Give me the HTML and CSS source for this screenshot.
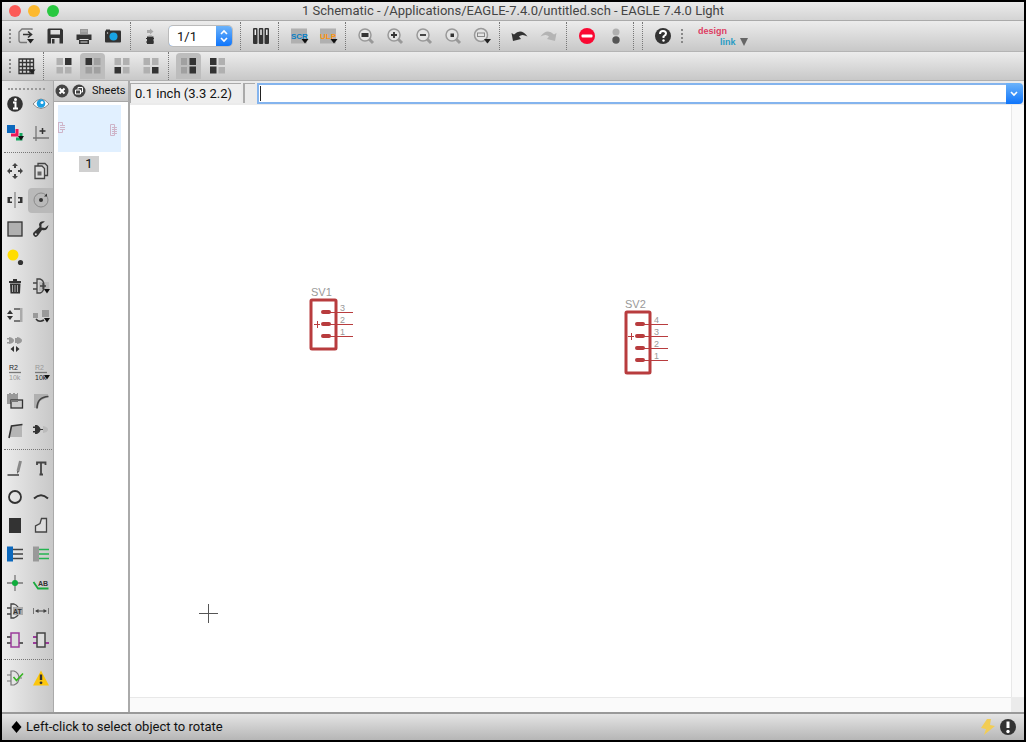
FILE: index.html
```html
<!DOCTYPE html>
<html lang="en">
<head>
<meta charset="utf-8">
<title>1 Schematic - EAGLE 7.4.0 Light</title>
<link rel="stylesheet" href="styles.css">
</head>
<body>
<div class="window">
<header class="titlebar">
  <div class="lights">
    <button class="light red" aria-label="Close"></button>
    <button class="light amber" aria-label="Minimize"></button>
    <button class="light green" aria-label="Zoom"></button>
  </div>
  <h1 class="title">1 Schematic - /Applications/EAGLE-7.4.0/untitled.sch - EAGLE 7.4.0 Light</h1>
</header>

<div class="toolbar main-bar">
  <span class="grip"></span>
  <button class="tool" aria-label="Open"><svg viewBox="0 0 20 20"><path d="M16 4V3H6L3 6V14Q3 16.500 5 16.500H11" fill="none" stroke="#777" stroke-width="1.300"/><path d="M7 8.500H15M12 5.500L15.500 8.500L12 11.500" fill="none" stroke="#333" stroke-width="1.600"/><path d="M11 13H18L14.500 17.500Z" fill="#222"/></svg></button>
  <button class="tool" aria-label="Save"><svg viewBox="0 0 20 20"><path fill-rule="evenodd" d="M3.500 2.500H16.500L18 4V17.500H2.500V3.500ZM5.500 4V8.500H15V4ZM6 12V17.500H14.500V12Z" fill="#333"/><rect x="7" y="13" width="2.500" height="4.500" fill="#333"/></svg></button>
  <button class="tool" aria-label="Print"><svg viewBox="0 0 20 20"><rect x="6" y="3" width="8" height="5" fill="#999"/><path d="M2.500 8.500H17.500V14H2.500Z" fill="#333"/><rect x="5" y="12" width="10" height="6" fill="#333"/><path d="M5.500 13.500H14.500M6.500 16H13.500" stroke="#ddd" stroke-width="1.200"/><path d="M7 5H13" stroke="#ccc" stroke-width=".6"/></svg></button>
  <button class="tool" aria-label="CAM"><svg viewBox="0 0 20 20"><rect x="2" y="4.500" width="16" height="12" rx="1" fill="#333"/><rect x="3" y="3.500" width="4" height="2" fill="#333"/><circle cx="10.500" cy="10.500" r="4" fill="#18a4e4"/><circle cx="4.500" cy="7" r=".7" fill="#ddd"/></svg></button>
  <span class="sep"></span>
  <button class="tool" aria-label="Board"><svg viewBox="0 0 20 20"><path d="M6 4H9V2.500L12.500 5.500L9 8.500V7H6Z" fill="#aaa"/><rect x="6" y="10.500" width="6.500" height="7.500" fill="#333"/><path d="M5 12.500H13M5 16H13" stroke="#333"/><path d="M7.500 10H11" stroke="#999"/></svg></button>
  <span class="combo">
    <select aria-label="Sheet"><option>1/1</option></select>
    <svg class="stepper" viewBox="0 0 16 20"><path d="M5 8L8 5L11 8M5 12L8 15L11 12" fill="none" stroke="#fff" stroke-width="1.600"/></svg>
  </span>
  <span class="sep"></span>
  <button class="tool" aria-label="Use library"><svg viewBox="0 0 20 20"><g fill="#333"><rect x="2" y="2" width="4.500" height="16" rx="1"/><rect x="7.800" y="2" width="4.500" height="16" rx="1"/><rect x="13.500" y="2" width="4.500" height="16" rx="1"/></g><path d="M4.300 3.500V9M10 3.500V9M15.800 3.500V9" stroke="#eee" stroke-width="1.500"/></svg></button>
  <span class="sep"></span>
  <button class="tool" aria-label="Script"><svg viewBox="0 0 20 20"><rect x="2" y="2.500" width="16" height="15" fill="#b0b0b0"/><text x="2" y="13" class="scr">SCR</text><path d="M12.500 13H19.500L16 17.500Z" fill="#111"/></svg></button>
  <button class="tool" aria-label="User language program"><svg viewBox="0 0 20 20"><rect x="2" y="2.500" width="16" height="15" fill="#b0b0b0"/><text x="2" y="13" class="ulp">ULP</text><path d="M12.500 13H19.500L16 17.500Z" fill="#111"/></svg></button>
  <span class="sep"></span>
  <button class="tool" aria-label="Fit"><svg viewBox="0 0 20 20"><path d="M13 13L17 17" stroke="#999" stroke-width="3"/><circle cx="9" cy="9" r="6" fill="#e4e4e4" stroke="#999" stroke-width="1.500"/><rect x="5.500" y="7" width="7" height="4" fill="#333"/></svg></button>
  <button class="tool" aria-label="Zoom in"><svg viewBox="0 0 20 20"><path d="M13 13L17 17" stroke="#999" stroke-width="3"/><circle cx="9" cy="9" r="6" fill="#e4e4e4" stroke="#999" stroke-width="1.500"/><path d="M6 9H12M9 6V12" stroke="#333" stroke-width="1.800"/></svg></button>
  <button class="tool" aria-label="Zoom out"><svg viewBox="0 0 20 20"><path d="M13 13L17 17" stroke="#999" stroke-width="3"/><circle cx="9" cy="9" r="6" fill="#e4e4e4" stroke="#999" stroke-width="1.500"/><path d="M6 9H12" stroke="#333" stroke-width="1.800"/></svg></button>
  <button class="tool" aria-label="Redraw"><svg viewBox="0 0 20 20"><path d="M13 13L17 17" stroke="#999" stroke-width="3"/><circle cx="9" cy="9" r="6" fill="#e4e4e4" stroke="#999" stroke-width="1.500"/><rect x="7.500" y="7.500" width="3.500" height="3.500" fill="#333"/></svg></button>
  <button class="tool" aria-label="Select zoom"><svg viewBox="0 0 20 20"><path d="M13 13L16 16" stroke="#999" stroke-width="3"/><circle cx="9" cy="9" r="6.500" fill="#e4e4e4" stroke="#999" stroke-width="1.500"/><rect x="5.500" y="7" width="7" height="3.500" fill="none" stroke="#888"/><path d="M12 13H19L15.500 17.500Z" fill="#222"/></svg></button>
  <span class="sep"></span>
  <button class="tool" aria-label="Undo"><svg viewBox="0 0 20 20"><path d="M1.500 7L4 8.500Q11 1.500 17.500 10.500Q12 7.500 9 10.500L11 13L3 15Z" fill="#333"/></svg></button>
  <button class="tool" aria-label="Redo"><svg viewBox="0 0 20 20"><path d="M17.500 7L15 8.500Q8 1.500 1.500 10.500Q7 7.500 10 10.500L8 13L16 15Z" fill="#b4b4b4"/></svg></button>
  <span class="sep"></span>
  <button class="tool" aria-label="Stop"><svg viewBox="0 0 20 20"><circle cx="10" cy="10" r="8" fill="#fa0832"/><rect x="4.500" y="8.500" width="11" height="3" rx="1" fill="#fff"/></svg></button>
  <button class="tool" aria-label="Go"><svg viewBox="0 0 20 20"><circle cx="10" cy="6" r="3.500" fill="#b0b0b0"/><circle cx="10" cy="14" r="3.700" fill="#555"/></svg></button>
  <span class="sep"></span><span class="sep"></span>
  <button class="tool" aria-label="Help"><svg viewBox="0 0 20 20"><circle cx="10" cy="10" r="8" fill="#333"/><path d="M7 8Q7 5 10 5Q13 5 13 7.500Q13 9 10.500 10.500V12" fill="none" stroke="#fff" stroke-width="2"/><circle cx="10.500" cy="14.500" r="1.200" fill="#fff"/></svg></button>
  <span class="grip late"></span>
  <button class="brand" aria-label="design link"><svg viewBox="0 0 54 24"><text x="0" y="10" class="design">design</text><text x="22" y="21" class="link">link</text><path d="M42 14H50L46 22Z" fill="#666"/></svg></button>
</div>

<div class="toolbar layer-bar">
  <span class="grip"></span>
  <button class="tool" aria-label="Grid"><svg viewBox="0 0 20 20"><path d="M3 3H17.500V17.500H3ZM3 6.500H17M3 10.500H17M3 14H17M6.500 3V17M10.500 3V17M14 3V17" fill="none" stroke="#333" stroke-width="1.300"/><path d="M12.500 13.500H19.500L16 18Z" fill="#222"/></svg></button>
  <span class="sep"></span>
  <button class="tool" aria-label="Top right"><svg viewBox="0 0 20 20"><path d="M2.500 2H9V9H2.500ZM2.500 11H9V17.500H2.500ZM11 11H17.500V17.500H11Z" fill="#b0b0b0"/><path d="M11 2H17.500V9H11Z" fill="#333"/></svg></button>
  <button class="tool on" aria-label="Top left"><svg viewBox="0 0 20 20"><path d="M11 2H17.500V9H11ZM2.500 11H9V17.500H2.500ZM11 11H17.500V17.500H11Z" fill="#a0a0a0"/><path d="M2.500 2H9V9H2.500Z" fill="#333"/></svg></button>
  <button class="tool" aria-label="Bottom left"><svg viewBox="0 0 20 20"><path d="M2.500 2H9V9H2.500ZM11 2H17.500V9H11ZM11 11H17.500V17.500H11Z" fill="#b0b0b0"/><path d="M2.500 11H9V17.500H2.500Z" fill="#333"/></svg></button>
  <button class="tool" aria-label="Bottom right"><svg viewBox="0 0 20 20"><path d="M2.500 2H9V9H2.500ZM11 2H17.500V9H11ZM2.500 11H9V17.500H2.500Z" fill="#b0b0b0"/><path d="M11 11H17.500V17.500H11Z" fill="#333"/></svg></button>
  <span class="sep"></span>
  <button class="tool on" aria-label="Right column"><svg viewBox="0 0 20 20"><path d="M2 2H8V9H2ZM2 11H8V17.500H2Z" fill="#a0a0a0"/><path d="M10.500 2H17V9H10.500ZM10.500 10.500H17V17.500H10.500Z" fill="#333"/></svg></button>
  <button class="tool" aria-label="Left column"><svg viewBox="0 0 20 20"><path d="M10.500 2H17V9H10.500ZM10.500 11H17V17.500H10.500Z" fill="#b0b0b0"/><path d="M2 2H8.500V9H2ZM2 10.500H8.500V17.500H2Z" fill="#333"/></svg></button>
</div>

<div class="workspace">
<nav class="palette" aria-label="Commands">
  <span class="grip-row"></span>
  <div class="group two">
    <button class="cmd" aria-label="Info"><svg viewBox="0 0 20 20"><circle cx="10" cy="10" r="7.800" fill="#333"/><circle cx="10.500" cy="5.500" r="1.500" fill="#fff"/><path d="M8 8.500H10.500V14.500M8 14.500H13" fill="none" stroke="#fff" stroke-width="2"/></svg></button>
    <button class="cmd" aria-label="Show"><svg viewBox="0 0 20 20"><path d="M2 10Q10 0 18 10Q10 19 2 10Z" fill="#fff" stroke="#888"/><circle cx="10" cy="9.500" r="4.300" fill="#1b9ee2"/><circle cx="11" cy="8.500" r="1.500" fill="#fff"/></svg></button>
    <button class="cmd" aria-label="Display"><svg viewBox="0 0 20 20"><rect x="2" y="2" width="8" height="8" fill="#0b68bd"/><path d="M12 6V12H6" fill="none" stroke="#ee1858" stroke-width="3"/><path d="M16 10V16H11" fill="none" stroke="#16a860" stroke-width="3"/><path d="M13 13H19L16 17.500Z" fill="#111"/></svg></button>
    <button class="cmd" aria-label="Mark"><svg viewBox="0 0 20 20"><path d="M5 3V18M2 15H18" stroke="#777" stroke-width="1.300"/><path d="M11.500 5V11M8.500 8H14.500" stroke="#333" stroke-width="1.500"/></svg></button>
  </div>
  <span class="rule"></span>
  <div class="group ten">
    <button class="cmd" aria-label="Move"><svg viewBox="0 0 20 20"><g fill="#444"><path d="M10 2L13 5H11V7H9V5H7ZM10 18L13 15H11V13H9V15H7ZM2 10L5 7V9H7V11H5V13ZM18 10L15 7V9H13V11H15V13Z"/></g></svg></button>
    <button class="cmd" aria-label="Copy"><svg viewBox="0 0 20 20"><path d="M7 5V2.500H14L16.500 5V14.500H14" fill="none" stroke="#444" stroke-width="1.300"/><path d="M4 5H11L13.500 7.500V17.500H4Z" fill="#ddd" stroke="#444" stroke-width="1.300"/><rect x="6.500" y="10.500" width="4" height="4" fill="#666"/></svg></button>
    <button class="cmd" aria-label="Mirror"><svg viewBox="0 0 20 20"><path d="M10 2V18" stroke="#888" stroke-width="1.300"/><path d="M2.500 7H7V8.500H5V11.500H7V13H2.500ZM17.500 7H13V8.500H15V11.500H13V13H17.500Z" fill="#333"/></svg></button>
    <button class="cmd on" aria-label="Rotate"><svg viewBox="0 0 20 20"><circle cx="10" cy="10" r="7" fill="none" stroke="#8a8a8a"/><circle cx="10" cy="10" r="2" fill="#333"/><path d="M13 6.500L16 3.500V6.500Z" fill="#333"/></svg></button>
    <button class="cmd" aria-label="Group"><svg viewBox="0 0 20 20"><rect x="3" y="3" width="14" height="14" fill="#b0b0b0" stroke="#333" stroke-width="1.300"/></svg></button>
    <button class="cmd" aria-label="Change"><svg viewBox="0 0 20 20"><path d="M17.500 6L14 9L10.500 8.500V5L14 2.500Q9 1.500 8 5.500L8.500 8L3 13Q1 15 3 17Q5 19 7 16.500L11 11Q16.500 12.500 17.500 6Z" fill="#333"/><circle cx="4.800" cy="15.200" r="1" fill="#ddd"/></svg></button>
    <button class="cmd" aria-label="Paste"><svg viewBox="0 0 20 20"><circle cx="8" cy="8" r="5.500" fill="#ffdd00"/><circle cx="15.500" cy="15.500" r="2.600" fill="#333"/></svg></button>
    <span></span>
    <button class="cmd" aria-label="Delete"><svg viewBox="0 0 20 20"><path d="M4 5H16V7H4ZM8 3H12V5H8ZM5 7.500H15.500L15 17.500H5.500Z" fill="#333"/><path d="M7.500 9V16M10 9V16M12.500 9V16" stroke="#aaa"/></svg></button>
    <button class="cmd" aria-label="Add"><svg viewBox="0 0 20 20"><rect x="8" y="6" width="10" height="9" fill="#bbb"/><path d="M6 3H9Q13 4 13 10Q13 16 9 17H6ZM2 7H6M2 13H6M9 10H15M12 7V13" fill="none" stroke="#444" stroke-width="1.300"/><path d="M13 13H19L16 17.500Z" fill="#111"/></svg></button>
    <button class="cmd" aria-label="Pinswap"><svg viewBox="0 0 20 20"><path d="M2 9L5 5L8 9ZM2 11H8L5 15Z" fill="#333"/><path d="M9 4H16M9 16H16" stroke="#555" stroke-width="1.300"/><rect x="15" y="3" width="2.500" height="14" fill="#aaa"/></svg></button>
    <button class="cmd" aria-label="Replace"><svg viewBox="0 0 20 20"><rect x="2" y="8" width="5" height="5" fill="#999"/><rect x="11" y="5" width="7" height="7" fill="#999"/><path d="M5 14Q8 18 13 15" fill="none" stroke="#333" stroke-width="1.500"/><path d="M13 13H19L16 17.500Z" fill="#111"/></svg></button>
    <button class="cmd" aria-label="Gateswap"><svg viewBox="0 0 20 20"><path d="M4 3Q9 4 9 6.500Q9 9 4 10ZM12 3Q17 4 17 6.500Q17 9 12 10ZM2 4H5V5.500H2ZM2 8H5V9.500H2ZM10 4H12V9H10Z" fill="#999"/><path d="M5.500 15L9 12V18ZM14.500 15L11 12V18Z" fill="#333"/></svg></button>
    <span></span>
    <button class="cmd" aria-label="Name"><svg viewBox="0 0 20 20"><text x="4" y="8" class="tiny dark">R2</text><path d="M4 10.500H16" stroke="#777" stroke-width="1.300"/><text x="4" y="18" class="tiny pale">10k</text></svg></button>
    <button class="cmd" aria-label="Value"><svg viewBox="0 0 20 20"><text x="4" y="8" class="tiny pale">R2</text><path d="M4 10.500H16" stroke="#777" stroke-width="1.300"/><text x="4" y="18" class="tiny dark">10k</text><path d="M13 13H19L16 17.500Z" fill="#111"/></svg></button>
    <button class="cmd" aria-label="Smash"><svg viewBox="0 0 20 20"><path d="M2 3H4V2H6V3H8V2H10V3H12V2H13V13H2Z" fill="#999"/><rect x="6" y="9" width="11.500" height="8" fill="#ccc" stroke="#333" stroke-width="1.300"/><path d="M6 10H13" stroke="#777" stroke-width="2"/></svg></button>
    <button class="cmd" aria-label="Miter"><svg viewBox="0 0 20 20"><path d="M3 3H17V6L9 10L7 17H3Z" fill="#b0b0b0"/><path d="M6 17.500Q6 6 17.500 5.500" fill="none" stroke="#444" stroke-width="1.600"/></svg></button>
    <button class="cmd" aria-label="Split"><svg viewBox="0 0 20 20"><path d="M6 6L17 5V17H5Z" fill="#b5b5b5"/><path d="M4 18L6.500 6L17.500 4.500" fill="none" stroke="#333" stroke-width="1.600"/></svg></button>
    <button class="cmd" aria-label="Invoke"><svg viewBox="0 0 20 20"><path d="M4 5H6Q9.500 7 9.500 9.500Q9.500 12 6 14H4ZM2 6.500H5V8H2ZM2 11H5V12.500H2Z" fill="#333"/><path d="M9 9H12V10H9Z" fill="#333"/><path d="M12 6Q17 7 17 9.500Q17 12 12 13Z" fill="#bbb"/></svg></button>
  </div>
  <span class="rule"></span>
  <div class="group seven">
    <button class="cmd" aria-label="Wire"><svg viewBox="0 0 20 20"><path d="M15.500 3L13 13" stroke="#888" stroke-width="3"/><path d="M2.500 17H14" stroke="#333" stroke-width="1.400"/><path d="M12 13L12 16L14.500 13Z" fill="#666"/></svg></button>
    <button class="cmd" aria-label="Text"><svg viewBox="0 0 20 20"><path d="M6 7V4.500H14.500V7M10 4.500V16.500M8.500 16.500H12" fill="none" stroke="#444" stroke-width="1.800"/></svg></button>
    <button class="cmd" aria-label="Circle"><svg viewBox="0 0 20 20"><circle cx="10" cy="10" r="6" fill="none" stroke="#333" stroke-width="1.800"/></svg></button>
    <button class="cmd" aria-label="Arc"><svg viewBox="0 0 20 20"><path d="M3 11.500Q10 5 17 11.500" fill="none" stroke="#333" stroke-width="2"/></svg></button>
    <button class="cmd" aria-label="Rect"><svg viewBox="0 0 20 20"><rect x="4" y="3" width="12" height="15" fill="#333"/></svg></button>
    <button class="cmd" aria-label="Polygon"><svg viewBox="0 0 20 20"><path d="M4.500 17V11L9 8.500L10.500 3.500H15.500V17Z" fill="#ddd" stroke="#444" stroke-width="1.300"/></svg></button>
    <button class="cmd" aria-label="Bus"><svg viewBox="0 0 20 20"><path d="M8 5.500H18M8 10H18M8 14.500H18" stroke="#444" stroke-width="1.600"/><rect x="2" y="2.500" width="6" height="15" fill="#0b68bd"/></svg></button>
    <button class="cmd" aria-label="Net"><svg viewBox="0 0 20 20"><path d="M8 5.500H18M8 10H18M8 14.500H18" stroke="#24b450" stroke-width="1.700"/><rect x="2" y="2.500" width="6" height="15" fill="#999"/></svg></button>
    <button class="cmd" aria-label="Junction"><svg viewBox="0 0 20 20"><path d="M2 10H18M10 2V18" stroke="#777" stroke-width="1.300"/><circle cx="10" cy="10" r="3" fill="#0eac3c"/></svg></button>
    <button class="cmd" aria-label="Label"><svg viewBox="0 0 20 20"><text x="7" y="13" class="label">AB</text><path d="M2.500 9L7 15.500H17.500" fill="none" stroke="#19aa3e" stroke-width="1.800"/></svg></button>
    <button class="cmd" aria-label="Attribute"><svg viewBox="0 0 20 20"><path d="M6 3H9Q14 5 14 10Q14 15 9 17H6ZM2 7H6M2 13H6" fill="none" stroke="#444" stroke-width="1.300"/><rect x="8" y="6" width="10" height="8" fill="#aaa"/><text x="8" y="13" class="label">AT</text></svg></button>
    <button class="cmd" aria-label="Dimension"><svg viewBox="0 0 20 20"><path d="M2.500 7V13M17.500 7V13" stroke="#777"/><path d="M5 10H15" stroke="#555" stroke-width="1.200"/><path d="M4 10L7.500 8V12ZM16 10L12.500 8V12Z" fill="#444"/></svg></button>
    <button class="cmd" aria-label="Module"><svg viewBox="0 0 20 20"><path d="M2 7H6M2 13H6M14 13H18" stroke="#333" stroke-width="1.600"/><rect x="6" y="3" width="8" height="14" fill="#ddd" stroke="#9a3b9a" stroke-width="1.500"/></svg></button>
    <button class="cmd" aria-label="Port"><svg viewBox="0 0 20 20"><path d="M2 7H6M2 13H6M14 13H18" stroke="#9a3b9a" stroke-width="1.800"/><rect x="6" y="3" width="8" height="14" fill="#ddd" stroke="#444" stroke-width="1.500"/></svg></button>
  </div>
  <span class="rule"></span>
  <div class="group one">
    <button class="cmd" aria-label="ERC"><svg viewBox="0 0 20 20"><path d="M6 3H9Q14 5 14 10Q14 15 9 17H6ZM2 7H6M2 13H6M14 10H17" fill="none" stroke="#777" stroke-width="1.200"/><path d="M8.500 9L11.500 12.500L18 5.500" fill="none" stroke="#36b422" stroke-width="1.600"/></svg></button>
    <button class="cmd" aria-label="Errors"><svg viewBox="0 0 20 20"><path d="M10 2.500L18 17.500H2Z" fill="#fcc60c"/><path d="M10 6.500V12" stroke="#333" stroke-width="2.400"/><circle cx="10" cy="14.800" r="1.400" fill="#333"/></svg></button>
  </div>
</nav>

<aside class="sheets">
  <div class="sheets-head">
    <button class="dot" aria-label="Close sheets"><svg viewBox="0 0 14 14"><circle cx="7" cy="7" r="6.500" fill="#444"/><path d="M4.500 4.500L9.500 9.500M9.500 4.500L4.500 9.500" stroke="#fff" stroke-width="2"/></svg></button>
    <button class="dot" aria-label="Detach sheets"><svg viewBox="0 0 14 14"><circle cx="7" cy="7" r="6.500" fill="#444"/><path d="M6 5.500V3.500H10.500V8H8.500M3.500 6H8.500V10H3.500Z" fill="none" stroke="#fff"/></svg></button>
    <h2>Sheets</h2>
  </div>
  <div class="sheet-list">
    <svg class="thumb" viewBox="0 0 63 47"><rect width="63" height="47" fill="#e1f0ff"/><g fill="none" stroke="#ceb4c8"><path d="M1 17.500H4.500V20M1 27.500H4.500V25M.5 17V28M2 20.500H7M2 22.500H7M2 24.500H7"/><path d="M52.500 19.500H56.500V30.500H52.500ZM54 22.500H59M54 24.500H59M54 26.500H59M54 28.500H59"/></g></svg>
    <span class="sheet-no">1</span>
  </div>
</aside>

<main class="editor">
  <div class="command-row">
    <output class="coords">0.1 inch (3.3 2.2)</output>
    <span class="slot"></span>
    <div class="command">
      <input type="text" aria-label="Command line" autofocus>
      <span class="caret"></span>
      <button aria-label="Command history"><svg viewBox="0 0 16 20"><path d="M5 9L8 12L11 9" fill="none" stroke="#fff" stroke-width="1.600"/></svg></button>
    </div>
  </div>
  <div class="canvas">
    <svg class="drawing" aria-label="Schematic">
      <path d="M69 508.500H88M78.500 499V518" stroke="#555"/>
      <g class="part">
        <text x="181" y="191" class="ref">SV1</text>
        <rect x="181" y="195" width="25" height="49" rx="1"/>
        <path class="pin" d="M196 207.500H223M196 219.500H223M196 231.500H223M184 219.500H190M187.500 216V223"/>
        <path class="pad" d="M193 207H199M193 219H199M193 231H199"/>
        <text x="210" y="206">3</text><text x="210" y="218">2</text><text x="210" y="230">1</text>
      </g>
      <g class="part">
        <text x="495" y="203" class="ref">SV2</text>
        <rect x="496" y="207" width="24" height="61" rx="1"/>
        <path class="pin" d="M510 219.500H538M510 231.500H538M510 243.500H538M510 255.500H538M498 231.500H504M501.500 228V235"/>
        <path class="pad" d="M507 219H513M507 231H513M507 243H513M507 255H513"/>
        <text x="524" y="218">4</text><text x="524" y="230">3</text><text x="524" y="242">2</text><text x="524" y="254">1</text>
      </g>
    </svg>
    <span class="track-y"></span>
    <span class="track-x"></span>
    <span class="corner"></span>
  </div>
</main>
</div>

<footer class="status">
  <svg class="diamond" viewBox="0 0 10 12"><path d="M5 0L10 6L5 12L0 6Z" fill="#000"/></svg>
  <span class="hint">Left-click to select object to rotate</span>
  <svg class="badge" viewBox="0 0 20 20"><path d="M9 2L3 11L8 12L6 18L17 9L12 8L13 2Z" fill="#f2cd55"/></svg>
  <svg class="badge" viewBox="0 0 20 20"><circle cx="10" cy="10" r="8" fill="#333"/><path d="M10 4.500V11" stroke="#fff" stroke-width="3"/><circle cx="10" cy="14.500" r="1.700" fill="#fff"/></svg>
</footer>
</div>
</body>
</html>
```
FILE: styles.css
```css
* { box-sizing: border-box; }
body { margin: 0; background: #000; font-family: Roboto, "Liberation Sans", sans-serif; font-size: 13px; color: #111; }
button { border: 0; padding: 0; background: none; font: inherit; }
h1, h2 { margin: 0; font-weight: 400; }
svg { display: block; }

.window { display: flex; flex-direction: column; height: 100vh; border: 2px solid #000; background: #d8d8d8; }

.titlebar { display: grid; grid-template-columns: 64px 1fr 64px; align-items: center; height: 19px; background: linear-gradient(#ebebeb, #d4d4d4); border-bottom: 1px solid #aaa; }
.lights { display: flex; gap: 8px; padding-left: 7px; }
.light { width: 12px; height: 12px; margin-right: -1px; border-radius: 50%; }
.red { background: #fc5b57; }
.amber { background: #fdb92e; }
.green { background: #28c840; }
.title { text-align: center; font-size: 13px; line-height: 16px; color: #444; }

.toolbar { display: flex; align-items: center; padding-left: 5px; background: linear-gradient(#ececec, #c8c8c8); }
.main-bar { height: 31px; border-bottom: 1px solid #b4b4b4; }
.layer-bar { height: 29px; border-bottom: 1px solid #b0b0b0; }
.grip { width: 4px; height: 14px; border-right: 2px dotted #888; }
.grip.late { margin-left: 2px; }
.tool { display: grid; place-items: center; width: 29px; height: 26px; }
.tool svg { width: 20px; height: 20px; }
.tool.on { width: 25px; margin: 0 2px; border-radius: 4px 4px 0 0; background: #bdbdbd; }
.sep { width: 4px; margin-right: 5px; height: 28px; border-right: 1px dotted #777; }

.combo { display: grid; width: 63px; height: 20px; margin: 0 5px 0 4px; border-radius: 4px; background: linear-gradient(#6cb3fa, #0f75fb); box-shadow: 0 0 0 1px #bbb; }
.combo select, .stepper { grid-area: 1 / 1; }
.combo select { appearance: none; width: 47px; height: 20px; border: 0; padding: 0 0 0 8px; border-radius: 4px 0 0 4px; background: #fff; color: #111; font: 13px Roboto, sans-serif; }
.stepper { width: 16px; height: 20px; justify-self: end; }
.brand { margin-left: 15px; }
.brand svg { width: 54px; height: 24px; }
.design, .link { font-family: "Liberation Sans", sans-serif; font-weight: 700; }
.design { font-size: 9px; fill: #dd3c62; }
.link { font-size: 9px; fill: #2a9bc4; }
.scr, .ulp { font: 700 8px "Liberation Sans", sans-serif; }
.label { font: 700 7px "Liberation Sans", sans-serif; }
.scr { fill: #087ec4; }
.ulp { fill: #fb9411; }
.label { fill: #333; }
.tiny { font: 7px "Liberation Sans", sans-serif; }
.dark { fill: #222; }
.pale { fill: #999; }

.workspace { display: flex; flex: 1; min-height: 0; }
.palette { display: flex; flex-direction: column; width: 52px; background: linear-gradient(90deg, #ececec, #c8c8c8); border-right: 1px solid #aaa; }
.grip-row { height: 9px; margin: 0 8px 0 6px; border-bottom: 2px dotted #999; }
.rule { height: 6px; margin: 0 1px 4px 2px; border-bottom: 1px dotted #777; }
.group { display: grid; grid-template-columns: 26px 25px; grid-auto-rows: 1fr; }
.two { height: 57px; }
.ten { height: 287px; }
.seven { height: 200px; }
.one { height: 28px; }
.cmd { display: grid; place-items: center; }
.cmd svg { width: 20px; height: 20px; }
.cmd.on { height: 25px; align-self: center; border-radius: 4px 0 0 4px; background: #b9b9b9; }

.sheets { display: flex; flex-direction: column; width: 76px; background: #fff; border-right: 2px solid #aaa; }
.sheets-head { display: flex; align-items: center; gap: 3px; height: 21px; padding-left: 1px; background: linear-gradient(#e4e4e4, #c6c6c6); border-bottom: 1px solid #a8a8a8; }
.dot svg { width: 14px; height: 14px; }
.sheets-head h2 { margin-left: 3px; font-size: 11px; line-height: 16px; }
.sheet-list { display: flex; flex-direction: column; align-items: center; gap: 4px; padding-top: 3px; padding-right: 4px; }
.thumb { width: 63px; height: 47px; }
.sheet-no { padding: 0 6px; line-height: 16px; font-size: 13px; background: #d0d0d0; }

.editor { display: flex; flex-direction: column; flex: 1; min-width: 0; }
.command-row { display: flex; align-items: center; height: 24px; background: #ebebeb; }
.coords { width: 111px; height: 20px; padding-left: 4px; line-height: 20px; white-space: nowrap; background: #eee; border: 1px solid #aaa; border-width: 1px 0 0 1px; }
.slot { width: 12px; height: 20px; margin: 0 2px 0 2px; border: 1px solid #aaa; border-width: 1px 0 0 2px; }
.command { position: relative; display: flex; flex: 1; height: 21px; margin-right: 1px; }
.command input { flex: 1; min-width: 0; border: 2px solid #84b4ee; border-right: 0; padding: 0 4px; background: #fff; outline: 0; caret-color: transparent; font: inherit; }
.caret { position: absolute; left: 3px; top: 3px; width: 1px; height: 15px; background: #222; }
.command button { width: 17px; border-radius: 0 4px 4px 0; background: linear-gradient(#6cb3fa, #0f75fb); }
.command button svg { width: 16px; height: 20px; }

.canvas { display: grid; grid-template: 1fr 15px / 1fr 13px; flex: 1; background: #fff; }
.drawing { width: 100%; height: 100%; }
.track-y { background: #fafafa; border-left: 1px solid #e8e8e8; }
.track-x { background: #fafafa; border-top: 1px solid #e8e8e8; }
.corner { background: #ebebeb; }
.part rect { fill: none; stroke: #b83c3e; stroke-width: 3; }
.part text { font: 9px "Liberation Sans", sans-serif; fill: #999; }
.part .ref { font-size: 11px; }
.pin { stroke: #b83c3e; }
.pad { stroke: #b83c3e; stroke-width: 4; stroke-linecap: round; }

.status { display: flex; align-items: center; height: 28px; padding: 0 6px 0 9px; background: linear-gradient(#e4e4e4, #b6b6b6); border-top: 2px solid #999; }
.diamond { width: 11px; height: 12px; margin-right: 4px; }
.hint { flex: 1; line-height: 16px; }
.badge { width: 20px; height: 20px; }
```
